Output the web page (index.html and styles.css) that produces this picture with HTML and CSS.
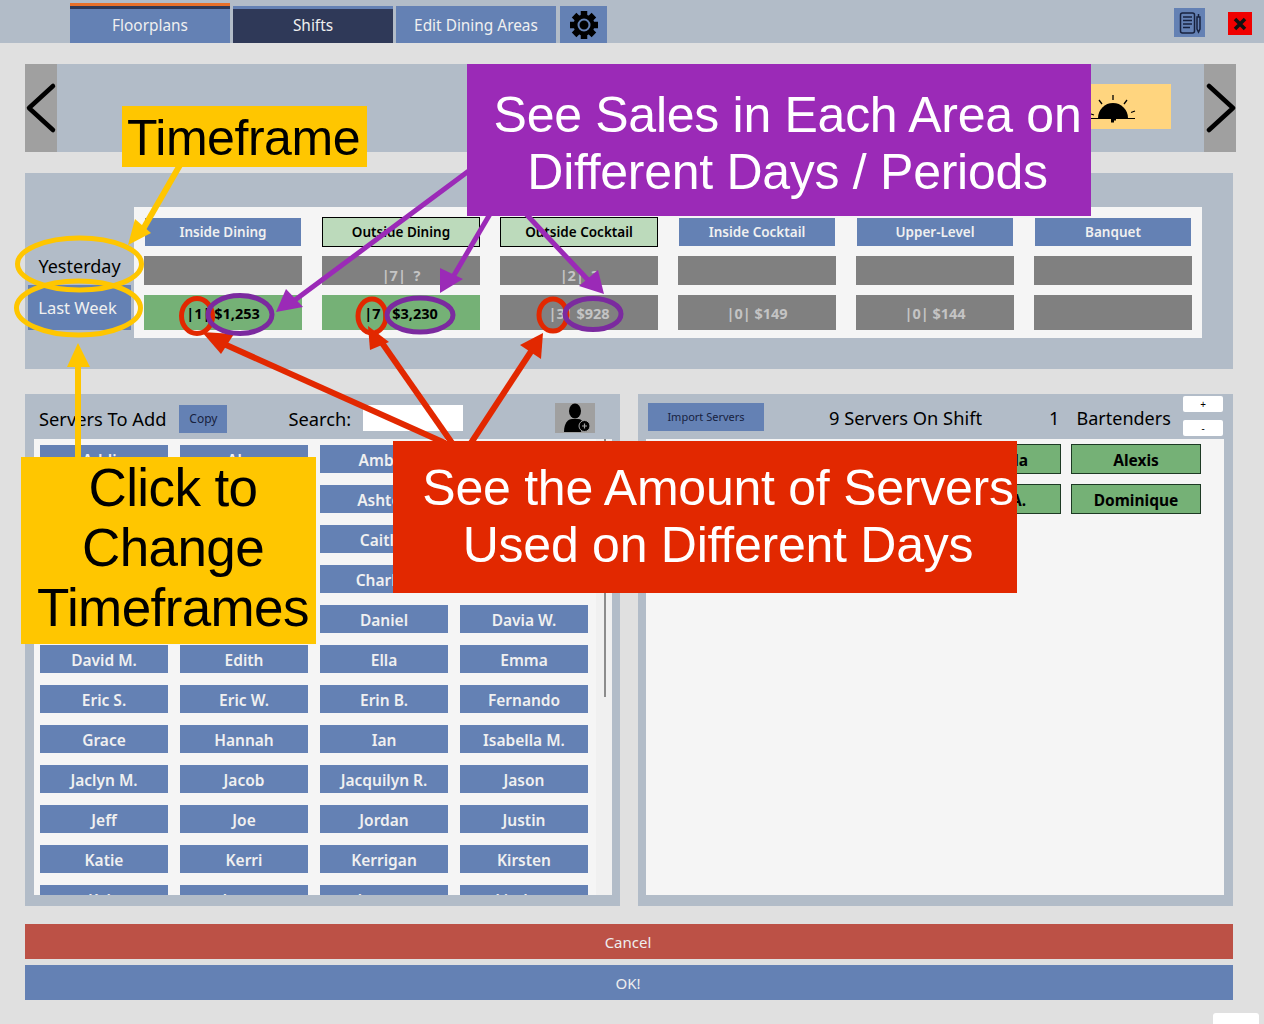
FILE: index.html
```html
<!DOCTYPE html>
<html lang="en">
<head>
  <meta charset="UTF-8">
  <title>Shifts</title>
  <link rel="stylesheet" href="styles.css">
</head>
<body>
  <div class="topbar">
    <div class="tab tab-active"><span>Floorplans</span></div>
    <div class="tab tab-dark"><span>Shifts</span></div>
    <div class="tab"><span>Edit Dining Areas</span></div>
    <div class="tab tab-gear">
      <svg width="32" height="32" viewBox="0 0 32 32">
        <g stroke="#000" stroke-width="6.500">
          <path d="M16 2v28M2 16h28M6.100 6.100l19.800 19.800M25.900 6.100L6.100 25.900"/>
        </g>
        <circle cx="16" cy="16" r="10.500" fill="#000"/>
        <circle cx="16" cy="16" r="5.500" fill="none" stroke="#6481b4" stroke-width="2"/>
      </svg>
    </div>
    <div class="notes-btn">
      <svg width="24" height="24" viewBox="0 0 24 24" fill="none" stroke="#17223f" stroke-width="1.500">
        <rect x="2.500" y="2" width="14" height="20" rx="2"/>
        <path d="M5 6h9M5 9.500h9M5 13h9M5 16.500h7"/>
        <path d="M19 6h3v12l-1.500 3-1.500-3zM20.500 6V3"/>
      </svg>
    </div>
    <div class="close-btn">
      <svg width="14" height="14" viewBox="0 0 14 14"><path d="M2 2l10 10M12 2L2 12" stroke="#111" stroke-width="3.500"/></svg>
    </div>
  </div>

  <div class="date-strip">
    <div class="date-arrow">
      <svg width="32" height="88" viewBox="0 0 32 88"><polyline points="28,22 4,44 28,66" fill="none" stroke="#000" stroke-width="4.500" stroke-linecap="round" stroke-linejoin="round"/></svg>
    </div>
    <div class="sun-box">
      <svg class="sun-icon" width="46" height="36" viewBox="0 0 46 36">
        <path d="M8 24a15 15 0 0 1 30 0z" fill="#000"/>
        <path d="M1 24.500h44" stroke="#000" stroke-width="1.200"/>
        <path d="M21 24h5v2.500h-2v2h-3z" fill="#000"/>
        <path d="M23 1v5M9 6l3 4M37 6l-3 4M1 20l3 1M45 17l-4 1.500" stroke="#000" stroke-width="1.300"/>
      </svg>
    </div>
    <div class="date-arrow">
      <svg width="32" height="88" viewBox="0 0 32 88"><polyline points="5,22 29,44 5,66" fill="none" stroke="#000" stroke-width="4.500" stroke-linecap="round" stroke-linejoin="round"/></svg>
    </div>
  </div>

  <div class="sales-panel">
    <div class="timeframes">
      <div class="timeframe">Yesterday</div>
      <div class="timeframe timeframe-on">Last Week</div>
    </div>
    <div class="areas">
      <div class="area-head">Inside Dining</div>
      <div class="area-head area-on">Outside Dining</div>
      <div class="area-head area-on">Outside Cocktail</div>
      <div class="area-head">Inside Cocktail</div>
      <div class="area-head">Upper-Level</div>
      <div class="area-head">Banquet</div>

      <div class="area-cell cell-mid"></div>
      <div class="area-cell cell-mid">|7| &nbsp;?</div>
      <div class="area-cell cell-mid">|2| &nbsp;?</div>
      <div class="area-cell cell-mid"></div>
      <div class="area-cell cell-mid"></div>
      <div class="area-cell cell-mid"></div>

      <div class="area-cell cell-low cell-green">|1| $1,253</div>
      <div class="area-cell cell-low cell-green">|7| $3,230</div>
      <div class="area-cell cell-low">|3| $928</div>
      <div class="area-cell cell-low">|0| $149</div>
      <div class="area-cell cell-low">|0| $144</div>
      <div class="area-cell cell-low"></div>
    </div>
  </div>

  <div class="staff-row">
    <div class="staff-panel">
      <div class="staff-head">
        <span class="head-text">Servers To Add</span>
        <div class="small-btn copy-btn">Copy</div>
        <span class="head-text search-label">Search:</span>
        <div class="search-box"></div>
        <div class="add-person">
          <svg width="30" height="30" viewBox="0 0 30 30">
            <ellipse cx="14" cy="8" rx="6" ry="7.500" fill="#000"/>
            <path d="M3 29c0-9 4-13 8-13h6c3 0 5 2 6 5l-3 8z" fill="#000"/>
            <circle cx="23.500" cy="23" r="5.500" fill="#000" stroke="#a0a0a0" stroke-width="1"/>
            <path d="M21 23h5M23.500 20.500v5" stroke="#a0a0a0" stroke-width="1.200"/>
          </svg>
        </div>
      </div>
      <div class="staff-list">
        <div class="server-grid">
          <div class="server">Addie</div><div class="server">Alan</div><div class="server">Amber</div><div class="server"></div>
          <div class="server"></div><div class="server"></div><div class="server">Ashton</div><div class="server"></div>
          <div class="server"></div><div class="server"></div><div class="server">Caitlin</div><div class="server"></div>
          <div class="server"></div><div class="server"></div><div class="server">Charles</div><div class="server"></div>
          <div class="server"></div><div class="server"></div><div class="server">Daniel</div><div class="server">Davia W.</div>
          <div class="server">David M.</div><div class="server">Edith</div><div class="server">Ella</div><div class="server">Emma</div>
          <div class="server">Eric S.</div><div class="server">Eric W.</div><div class="server">Erin B.</div><div class="server">Fernando</div>
          <div class="server">Grace</div><div class="server">Hannah</div><div class="server">Ian</div><div class="server">Isabella M.</div>
          <div class="server">Jaclyn M.</div><div class="server">Jacob</div><div class="server">Jacquilyn R.</div><div class="server">Jason</div>
          <div class="server">Jeff</div><div class="server">Joe</div><div class="server">Jordan</div><div class="server">Justin</div>
          <div class="server">Katie</div><div class="server">Kerri</div><div class="server">Kerrigan</div><div class="server">Kirsten</div>
          <div class="server">Kyle</div><div class="server">Laura</div><div class="server">Lauren</div><div class="server">Lindsey</div>
        </div>
        <div class="scroll-track"><div class="scroll-thumb"></div></div>
      </div>
    </div>

    <div class="staff-panel shift-panel">
      <div class="staff-head shift-head">
        <div class="small-btn import-btn">Import Servers</div>
        <span class="head-text on-shift">9 Servers On Shift</span>
        <span class="head-text bar-count">1</span>
        <span class="head-text bar-label">Bartenders</span>
        <div class="stepper">
          <div class="step-btn">+</div>
          <div class="step-btn">-</div>
        </div>
      </div>
      <div class="shift-list">
        <div class="on-server">Amanda</div><div class="on-server">Alexis</div>
        <div class="on-server">Brian A.</div><div class="on-server">Dominique</div>
      </div>
    </div>
  </div>

  <div class="wide-btn cancel-btn">Cancel</div>
  <div class="wide-btn ok-btn">OK!</div>
  <div class="corner-tab"></div>

  <!-- annotation layer -->
  <svg class="callout-lines" width="1264" height="1024" viewBox="0 0 1264 1024">
    <g stroke="#ffc600" fill="none" stroke-width="5">
      <ellipse cx="79.500" cy="264" rx="62" ry="26"/>
      <ellipse cx="78.500" cy="308" rx="62" ry="27"/>
      <path d="M78 460V362" stroke-width="6"/>
      <path d="M180 165L142 231" stroke-width="6"/>
    </g>
    <path d="M78 343L90 367H67z" fill="#ffc600"/>
    <path d="M128 245L135 219L151 233z" fill="#ffc600"/>

    <g stroke="#9b2ab7" fill="none" stroke-width="5">
      <path d="M470 170L295 300"/>
      <path d="M490 214L450 282"/>
      <path d="M526 214L590 282"/>
    </g>
    <path d="M276 312L286 289L303 307z" fill="#9b2ab7"/>
    <path d="M440 293L440 268L463 279z" fill="#9b2ab7"/>
    <path d="M604 294L579 286L598 270z" fill="#9b2ab7"/>

    <g stroke="#e22800" fill="none" stroke-width="6">
      <path d="M445 443L215 340"/>
      <path d="M452 443L380 340"/>
      <path d="M471 443L532 350"/>
      <ellipse cx="197" cy="316" rx="15.500" ry="17.500" stroke-width="5"/>
      <ellipse cx="372" cy="316" rx="14" ry="17" stroke-width="5"/>
      <ellipse cx="553" cy="315" rx="14" ry="16" stroke-width="5"/>
    </g>
    <path d="M202 332L234 334L221 354z" fill="#e22800"/>
    <path d="M368 326L389 342L370 350z" fill="#e22800"/>
    <path d="M543 333L541 359L520 345z" fill="#e22800"/>

    <g stroke="#7b2a9f" fill="none" stroke-width="5">
      <ellipse cx="240" cy="314.500" rx="32" ry="19"/>
      <ellipse cx="420" cy="315" rx="33" ry="17"/>
      <ellipse cx="593" cy="314" rx="28" ry="15.500"/>
    </g>
  </svg>

  <div class="callout callout-timeframe">Timeframe</div>
  <div class="callout callout-sales">See Sales in Each Area on<br>Different Days / Periods</div>
  <div class="callout callout-click">Click to<br>Change<br>Timeframes</div>
  <div class="callout callout-servers">See the Amount of Servers<br>Used on Different Days</div>
</body>
</html>
```

FILE: styles.css
```css
* {
  box-sizing: border-box;
}
html, body {
  margin: 0;
  height: 1024px;
}
body {
  position: relative;
  overflow: hidden;
  background: #e0e0e0;
  font-family: "Noto Sans", "Open Sans", sans-serif;
  color: #000;
}

/* top bar */
.topbar {
  display: flex;
  align-items: flex-end;
  height: 43px;
  padding-left: 70px;
  background: #b2bcc8;
}
.tab {
  display: flex;
  align-items: center;
  justify-content: center;
  width: 160px;
  height: 37px;
  margin-right: 3px;
  padding-top: 1px;
  background: #6481b4;
  color: #f0f0f0;
  font-size: 15.400px;
}
.tab-active {
  height: 40px;
  border-top: 3px solid #e8702a;
  box-shadow: inset 0 3px 0 #2f3958;
}
.tab-dark {
  background: #2f3958;
  box-shadow: inset 0 3px 0 #6481b4;
}
.tab-gear {
  width: 47px;
  margin-left: 1px;
  margin-right: 0;
  padding-top: 0;
}
.notes-btn {
  display: flex;
  align-items: center;
  justify-content: center;
  width: 31px;
  height: 29px;
  margin-left: auto;
  margin-bottom: 6px;
  background: #6481b4;
}
.close-btn {
  display: flex;
  align-items: center;
  justify-content: center;
  width: 24px;
  height: 23px;
  margin-left: 23px;
  margin-right: 12px;
  margin-bottom: 8px;
  background: #f00000;
}

/* date strip */
.date-strip {
  display: flex;
  align-items: flex-start;
  width: 1211px;
  height: 88px;
  margin: 21px 0 0 25px;
  background: #b2bcc8;
}
.date-arrow {
  width: 32px;
  height: 88px;
  background: #a0a0a0;
}
.sun-box {
  display: flex;
  align-items: center;
  justify-content: center;
  width: 116px;
  height: 45px;
  margin: 20px 33px 0 auto;
  background: #ffd57f;
}
.sun-icon {
  margin-top: 10px;
}

/* sales by area */
.sales-panel {
  display: flex;
  width: 1208px;
  height: 196px;
  margin: 21px 0 0 25px;
  padding-top: 34px;
  background: #b2bcc8;
}
.timeframes {
  width: 103px;
  margin: 41px 3px 0 3px;
}
.timeframe {
  display: flex;
  align-items: center;
  justify-content: center;
  height: 37px;
  font-size: 18px;
  padding-bottom: 2px;
}
.timeframe-on {
  height: 45px;
  padding: 0 4px 0 0;
  background: #6481b4;
  color: #f0f0f0;
  font-size: 16.500px;
}
.areas {
  display: grid;
  grid-template-columns: repeat(6, 158px);
  grid-template-rows: 30px 29px 36px;
  column-gap: 20px;
  row-gap: 9px;
  align-content: start;
  width: 1068px;
  height: 131px;
  padding: 10px 10px 0;
  background: #f5f5f5;
}
.area-head {
  display: flex;
  align-items: center;
  justify-content: center;
  border: 1px solid #f5f5f5;
  background: #6481b4;
  color: #f0f0f0;
  font-size: 13.500px;
  font-weight: 600;
}
.area-on {
  border-color: #000;
  background: #bcdabb;
  color: #000;
}
.area-cell {
  display: flex;
  align-items: center;
  justify-content: center;
  background: #808080;
  color: #c4c4c4;
  font-size: 14.500px;
  font-weight: 700;
}
.cell-mid {
  padding-top: 8px;
}
.cell-low {
  margin-top: 1px;
}
.cell-green {
  background: #75b176;
  color: #000;
}

/* servers */
.staff-row {
  display: flex;
  gap: 18px;
  height: 512px;
  margin: 25px 0 0 25px;
}
.staff-panel {
  width: 595px;
  background: #b2bcc8;
}
.staff-head {
  display: flex;
  align-items: flex-start;
  height: 45px;
  padding: 11px 0 0 14px;
}
.head-text {
  font-size: 18.300px;
  line-height: 28px;
}
.small-btn {
  display: flex;
  align-items: center;
  justify-content: center;
  height: 28px;
  padding-bottom: 2px;
  background: #6481b4;
  color: #17223f;
  font-size: 12px;
}
.copy-btn {
  width: 48px;
  margin-left: 13px;
}
.search-label {
  margin-left: 61px;
}
.search-box {
  width: 100px;
  height: 26px;
  margin-left: 12px;
  background: #fff;
}
.add-person {
  width: 40px;
  height: 30px;
  margin-left: 92px;
  margin-top: -2px;
  padding-left: 6px;
  background: #a0a0a0;
}
.staff-list {
  display: flex;
  justify-content: space-between;
  width: 578px;
  height: 456px;
  margin-left: 9px;
  padding: 6px 0 0 6px;
  overflow: hidden;
  background: #f5f5f5;
}
.server-grid {
  display: grid;
  grid-template-columns: repeat(4, 128px);
  grid-auto-rows: 28px;
  gap: 12px;
}
.server {
  display: flex;
  align-items: center;
  justify-content: center;
  padding-top: 1px;
  background: #6481b4;
  color: #f0f0f0;
  font-size: 15.500px;
  font-weight: 600;
}
.scroll-track {
  width: 16px;
  margin-top: -6px;
  background: #f0f0f0;
}
.scroll-thumb {
  width: 2px;
  height: 258px;
  margin-left: 8px;
  background: #8c8c8c;
}
.shift-head {
  position: relative;
  padding: 9px 0 0 10px;
}
.shift-head .head-text {
  margin-top: 1px;
}
.import-btn {
  width: 116px;
  font-size: 11px;
}
.on-shift {
  margin-left: 65px;
}
.bar-count {
  margin-left: 67px;
}
.shift-head .bar-label {
  margin-left: 17px;
  font-size: 18px;
}
.stepper {
  position: absolute;
  top: 2px;
  right: 10px;
  display: flex;
  flex-direction: column;
  gap: 8px;
}
.step-btn {
  display: flex;
  align-items: center;
  justify-content: center;
  width: 40px;
  height: 16px;
  border-radius: 2px;
  background: #fff;
  font-size: 10px;
}
.shift-list {
  display: grid;
  grid-template-columns: repeat(2, 130px);
  grid-auto-rows: 30px;
  gap: 10px;
  justify-content: end;
  align-content: start;
  width: 578px;
  height: 456px;
  margin-left: 8px;
  padding: 5px 23px 0 0;
  background: #f5f5f5;
}
.on-server {
  display: flex;
  align-items: center;
  justify-content: center;
  padding-top: 2px;
  border: 1px solid #1d3a24;
  background: #75b176;
  font-size: 15.500px;
  font-weight: 700;
}

/* bottom buttons */
.wide-btn {
  display: flex;
  align-items: center;
  justify-content: center;
  width: 1208px;
  height: 35px;
  margin-left: 25px;
  padding-right: 2px;
  color: #eeeeee;
  font-size: 15px;
}
.cancel-btn {
  margin-top: 18px;
  background: #bc5146;
}
.ok-btn {
  margin-top: 6px;
  background: #6481b4;
}
.corner-tab {
  width: 46px;
  height: 11px;
  margin: 13px 0 0 1213px;
  border-radius: 3px 3px 0 0;
  background: #fff;
}

/* annotations drawn over the page */
.callout-lines {
  position: absolute;
  top: 0;
  left: 0;
}
.callout {
  position: absolute;
  font-family: "Liberation Sans", Arial, sans-serif;
  text-align: center;
}
.callout-timeframe {
  top: 106px;
  left: 122px;
  width: 245px;
  height: 61px;
  padding-right: 2px;
  background: #ffc600;
  font-size: 50px;
  letter-spacing: -.45px;
  line-height: 64px;
}
.callout-sales {
  top: 64px;
  left: 467px;
  width: 624px;
  height: 152px;
  padding: 23px 0 0 17px;
  background: #9b2ab7;
  color: #fff;
  font-size: 50px;
  letter-spacing: -.28px;
  line-height: 57px;
}
.callout-click {
  top: 457px;
  left: 21px;
  width: 295px;
  height: 187px;
  padding: 1px 0 0 9px;
  background: #ffc600;
  font-size: 53px;
  letter-spacing: -.6px;
  line-height: 60px;
}
.callout-servers {
  top: 441px;
  left: 393px;
  width: 624px;
  height: 152px;
  padding: 19px 0 0 26px;
  background: #e22800;
  color: #fff;
  font-size: 50px;
  letter-spacing: -.25px;
  line-height: 57px;
}
```
